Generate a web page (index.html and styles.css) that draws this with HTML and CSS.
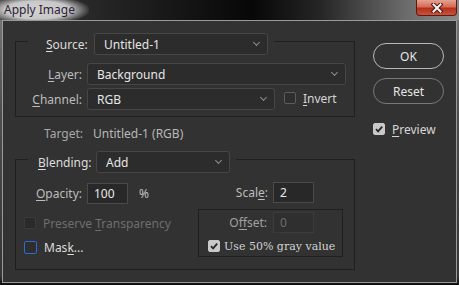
FILE: index.html
```html
<!DOCTYPE html>
<html lang="en">
<head>
  <meta charset="UTF-8" />
  <meta name="viewport" content="width=device-width, initial-scale=1.0"/>
  <title>Apply Image</title>
  <link rel="stylesheet" href="styles.css">
</head>
<body>

  <div class="window">
    <div class="titlebar">
      <span class="title">Apply Image</span>
      <button class="close" aria-label="Close">
        <svg width="14" height="10" viewBox="0 0 14 10">
          <path d="M3.5 1.5 L10.5 8.5 M10.5 1.5 L3.5 8.5" stroke="#4c1710" stroke-width="4" stroke-linecap="square"/>
          <path d="M3.5 1.5 L10.5 8.5 M10.5 1.5 L3.5 8.5" stroke="#f4f4f4" stroke-width="2" stroke-linecap="square"/>
        </svg>
      </button>
    </div>

    <div class="client">
      <div class="main">
        <fieldset class="group source-group">
          <legend>
            <span class="legend-label source-label"><u>S</u>ource:</span>
            <div class="dropdown source-select"><span>Untitled-1</span></div>
          </legend>
          <div class="row row-layer">
            <span class="label"><u>L</u>ayer:</span>
            <div class="dropdown layer-select"><span>Background</span></div>
          </div>
          <div class="row row-channel">
            <span class="label"><u>C</u>hannel:</span>
            <div class="dropdown channel-select"><span>RGB</span></div>
            <label class="check invert"><span class="box"></span><span><u>I</u>nvert</span></label>
          </div>
        </fieldset>

        <div class="target">
          <span class="target-label">Target:</span>
          <span class="target-value">Untitled-1 (RGB)</span>
        </div>

        <fieldset class="group blend-group">
          <legend>
            <span class="legend-label blend-label"><u>B</u>lending:</span>
            <div class="dropdown blend-select"><span>Add</span></div>
          </legend>
          <div class="blend-grid">
            <div class="opacity">
              <span class="label"><u>O</u>pacity:</span>
              <div class="field">100</div>
              <span class="percent">%</span>
            </div>
            <div class="scale">
              <span class="label">Scal<u>e</u>:</span>
              <div class="field">2</div>
            </div>
            <div class="checks">
              <label class="check"><span class="box dim"></span><span class="disabled-text">Preserve <u>T</u>ransparency</span></label>
              <label class="check"><span class="box focus"></span><span class="mask-text">Mas<u>k</u>...</span></label>
            </div>
            <div class="offset-box">
              <div class="offset-row">
                <span class="label offset-label">O<u>f</u>fset:</span>
                <div class="field disabled">0</div>
              </div>
              <label class="check gray-row">
                <span class="box checked">
                  <svg width="10" height="10" viewBox="0 0 10 10"><path d="M2 5.2 L4.1 7.3 L8.2 2.6" fill="none" stroke="#2a2a2a" stroke-width="1.9"/></svg>
                </span>
                <span>Use 50% gray value</span>
              </label>
            </div>
          </div>
        </fieldset>
      </div>

      <div class="side">
        <button class="btn">OK</button>
        <button class="btn secondary">Reset</button>
        <label class="check preview">
          <span class="box checked">
            <svg width="10" height="10" viewBox="0 0 10 10"><path d="M2 5.2 L4.1 7.3 L8.2 2.6" fill="none" stroke="#2a2a2a" stroke-width="1.9"/></svg>
          </span>
          <span><u>P</u>review</span>
        </label>
      </div>
    </div>
  </div>

</body>
</html>
```

FILE: styles.css
```css
* {
  box-sizing: border-box;
}

body {
  margin: 0;
  width: 459px;
  height: 285px;
  overflow: hidden;
  font-family: "Noto Sans", "Open Sans", sans-serif;
  font-size: 12px;
  color: #c4c4c4;
  background: linear-gradient(180deg, #7c7c7c 0, #4e4e4e 40%, #363636 97%, #0c0c0c 100%);
}

u {
  text-underline-offset: 2px;
}

.window {
  display: flex;
  flex-direction: column;
  height: 285px;
}

.titlebar {
  height: 20px;
  display: flex;
  align-items: flex-start;
  background: linear-gradient(90deg, #3a3a3a 0, #1e1e1e 30%, #070707 55%, #262626 70%, #6a6a6a 88%, #8c8c8c 100%);
}

.title {
  height: 20px;
  line-height: 20px;
  padding: 0 14px 0 4px;
  color: #2d2236;
  background: radial-gradient(ellipse 60% 75% at 42% 50%, #d2d2d2 0, #c8c8c8 60%, rgba(190, 190, 190, 0) 100%);
}

.close {
  margin-left: auto;
  margin-right: 2px;
  width: 41px;
  height: 16px;
  padding: 0;
  border: 1px solid #5c1c12;
  border-top: none;
  border-radius: 0 0 4px 4px;
  background: linear-gradient(180deg, #e6a292 0, #d46c57 45%, #b5301c 55%, #c9533c 100%);
  display: flex;
  align-items: center;
  justify-content: center;
}

.client {
  flex: 1;
  margin: 0 2px 2px 2px;
  border: 1px solid #9a9a9a;
  background: #323232;
  display: flex;
}

.main {
  width: 352px;
  padding: 6px 0 0 12px;
}

.group {
  margin: 0;
  padding: 0 0 6px;
  width: 340px;
  min-inline-size: 0;
  border: 1px solid #1f1f1f;
}

.group legend {
  margin-left: 12px;
  padding: 6px 6px 0 18px;
  display: flex;
  align-items: center;
}

.legend-label {
  color: #dcdcdc;
}

.source-label {
  width: 48px;
}

.blend-group {
  margin-top: 3px;
  padding-bottom: 12px;
}

.blend-group legend {
  padding-left: 10px;
}

.blend-label {
  width: 58px;
}

.dropdown {
  height: 22px;
  display: flex;
  align-items: center;
  padding-left: 9px;
  border: 1px solid #464646;
  border-radius: 3px;
  background: #2c2c2c;
  color: #e6e6e6;
}

.dropdown::after {
  content: '';
  width: 4px;
  height: 4px;
  margin: -3px 8px 0 auto;
  border-right: 1px solid #8e8e8e;
  border-bottom: 1px solid #8e8e8e;
  transform: rotate(45deg);
}

.source-select { width: 174px; }
.layer-select { width: 259px; }
.channel-select { width: 188px; }
.blend-select { width: 134px; }

.row {
  display: flex;
  align-items: center;
  height: 22px;
}

.row-layer {
  margin-top: 8px;
}

.row-channel {
  margin-top: 3px;
}

.label {
  width: 71px;
  flex-shrink: 0;
  padding-right: 5px;
  text-align: right;
  color: #bdbdbd;
}

.check {
  display: flex;
  align-items: center;
  gap: 7px;
  height: 16px;
  color: #d6d6d6;
}

.invert {
  margin-left: 9px;
  margin-top: -2px;
}

.box {
  width: 12px;
  height: 12px;
  flex-shrink: 0;
  border: 1px solid #5c5c5c;
  border-radius: 2px;
  background: #2e2e2e;
}

.box.checked {
  display: flex;
  align-items: center;
  justify-content: center;
  border-color: #c9c9c9;
  background: #c9c9c9;
}

.box.dim {
  border-color: #3b3b3b;
  background: #2a2a2a;
}

.box.focus {
  width: 13px;
  height: 13px;
  border: 1.5px solid #2d6bd2;
}

.target {
  display: flex;
  margin-top: 9px;
  line-height: 16px;
}

.target-label {
  width: 68px;
  text-align: right;
  color: #a8a8a8;
}

.target-value {
  margin-left: 10px;
  color: #b8b8b8;
}

.blend-grid {
  display: grid;
  grid-template-columns: 182px 145px;
  row-gap: 5px;
  margin-top: 8px;
}

.opacity {
  display: flex;
  align-items: center;
  margin-top: 2px;
}

.percent {
  margin-left: 11px;
  color: #c4c4c4;
}

.scale {
  display: flex;
  align-items: center;
}

.scale .label {
  width: 75px;
}

.field {
  width: 41px;
  height: 21px;
  padding-left: 6px;
  line-height: 19px;
  border: 1px solid #4a4a4a;
  background: #282828;
  color: #e8e8e8;
}

.field.disabled {
  border-color: #3c3c3c;
  background: #2f2f2f;
  color: #6c6c6c;
}

.checks {
  display: flex;
  flex-direction: column;
  gap: 8px;
  padding: 6px 0 0 8px;
}

.disabled-text {
  color: #6e6e6e;
}

.mask-text {
  color: #dcdcdc;
}

.offset-box {
  height: 48px;
  padding-top: 2px;
  border: 1px solid #1f1f1f;
}

.offset-row {
  display: flex;
  align-items: center;
}

.offset-label {
  width: 74px;
  padding-right: 6px;
  color: #a0a0a0;
}

.gray-row {
  margin-top: 5px;
  padding-left: 9px;
  gap: 4px;
  font-family: "DejaVu Serif", "Liberation Serif", serif;
  font-size: 11px;
  color: #d2d2d2;
}

.side {
  display: flex;
  flex-direction: column;
  align-items: flex-start;
  padding: 22px 0 0 18px;
}

.btn {
  width: 71px;
  height: 26px;
  padding: 0;
  border: 1px solid #b9b9b9;
  border-radius: 13px;
  background: transparent;
  color: #e6e6e6;
  font-family: inherit;
  font-size: 12px;
}

.btn.secondary {
  margin-top: 9px;
  border-color: #787878;
}

.preview {
  margin-top: 17px;
}
```
